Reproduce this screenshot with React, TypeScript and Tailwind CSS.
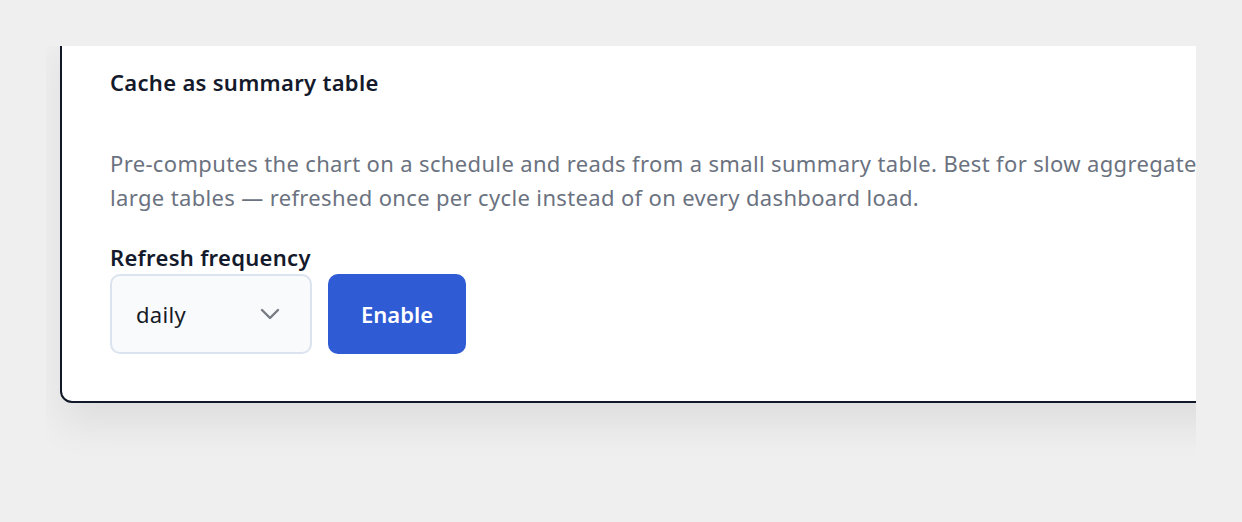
import React from "react";

const font = { fontFamily: '"Noto Sans", "Open Sans", sans-serif' };

export default function App() {
  return (
    <div className="min-h-[522px] w-full bg-[#efefef] pt-[46px] pl-[46px]" style={font}>
      {/* clipped frame, the card's shadow shows inside it */}
      <div className="h-[420px] w-[1150px] overflow-hidden pl-[14px]">
        <div className="-mt-[20px] w-[1400px] rounded-[12px] border-2 border-[#111827] bg-white pl-[48px] pt-[40px] pb-[47px] shadow-[0_22px_40px_rgba(0,0,0,0.07)]">
          <h2 className="text-[22px] font-semibold leading-[28px] tracking-[0.3px] text-[#141a2b]">Cache as summary table</h2>

          <p className="mt-[50px] whitespace-nowrap text-[22px] leading-[34px] tracking-[0.35px] text-[#6b7280]">
            Pre-computes the chart on a schedule and reads from a small summary table. Best for slow aggregate queries on
            <br />
            large tables — refreshed once per cycle instead of on every dashboard load.
          </p>

          <div className="mt-[29px] text-[22px] font-semibold leading-[28px] tracking-[0.3px] text-[#141a2b]">Refresh frequency</div>

          <div className="mt-[3px] flex gap-4">
            <div className="flex h-[80px] w-[202px] items-center justify-between rounded-[10px] border-2 border-[#dbe3ef] bg-[#f8fafc] pl-[24px] pr-[30px]">
              <span className="text-[22px] tracking-[0.3px] text-[#161b26]">daily</span>
              <svg width="20" height="12" viewBox="0 0 20 12" fill="none">
                <path d="M2 2l8 8 8-8" stroke="#777b82" strokeWidth="2.4" strokeLinecap="round" strokeLinejoin="round" />
              </svg>
            </div>
            <button className="h-[80px] w-[138px] rounded-[10px] bg-[#2f5bd4] text-[22px] font-semibold text-white">
              Enable
            </button>
          </div>
        </div>
      </div>
    </div>
  );
}
